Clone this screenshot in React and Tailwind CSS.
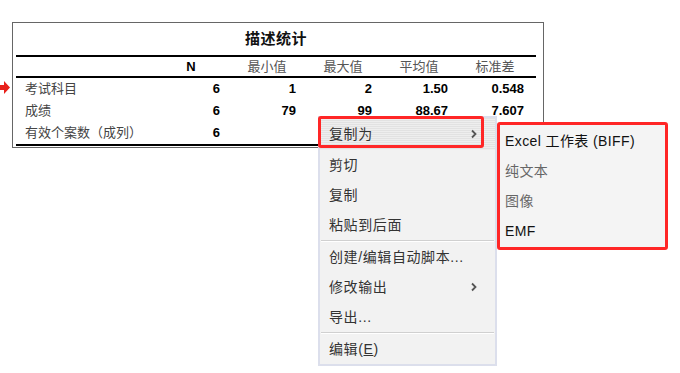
import React from "react";

const font = "font-['Liberation_Sans','Noto_Sans_CJK_SC',sans-serif]";

const rows = [
  { label: "考试科目", n: "6", min: "1", max: "2", mean: "1.50", sd: "0.548" },
  { label: "成绩", n: "6", min: "79", max: "99", mean: "88.67", sd: "7.607" },
  { label: "有效个案数（成列）", n: "6", min: "", max: "", mean: "", sd: "" },
];

const cols = "grid grid-cols-[144px_62px_76px_76px_76px_76px_1fr]";

function Chevron() {
  return (
    <svg width="8" height="10" viewBox="0 0 8 10" className="text-[#555]">
      <path d="M2 1.5 L5.5 5 L2 8.5" fill="none" stroke="currentColor" strokeWidth="1.8" />
    </svg>
  );
}

function MenuItem({ children, arrow, className = "" }) {
  return (
    <div className={`h-[30px] flex items-center justify-between pl-[9px] pr-[17px] text-[14px] tracking-[0.6px] text-[#333] ${className}`}>
      <span>{children}</span>
      {arrow && <Chevron />}
    </div>
  );
}

function Sep() {
  return <div className="h-[2px] mx-[1px] border-t border-[#d0d0d0] bg-white" />;
}

export default function App() {
  return (
    <div className={`relative w-[680px] h-[373px] bg-white overflow-hidden ${font}`}>
      {/* red pointer */}
      <svg width="10" height="13" viewBox="0 0 10 13" className="absolute left-0 top-[81px]">
        <polygon points="0,4 4,4 4,0 10,6.5 4,13 4,9 0,9" fill="#e8211b" />
      </svg>

      {/* 描述统计 table */}
      <div className="ml-[12px] mt-[22px] w-[532px] border border-[#666] pl-[3px] pr-[7px] pb-[1px]">
        <div className="h-[32px] flex items-center justify-center text-[15px] font-bold text-[#111] tracking-[0.5px]">
          描述统计
        </div>
        <div className="h-[2px] bg-black" />
        <div className={`${cols} h-[19px] items-center text-[13px] text-[#555]`}>
          <div />
          <div className="text-center font-bold text-black">N</div>
          <div className="text-center pl-[14px]">最小值</div>
          <div className="text-center pl-[14px]">最大值</div>
          <div className="text-center pl-[14px]">平均值</div>
          <div className="text-center pl-[14px]">标准差</div>
          <div />
        </div>
        <div className="h-[2px] bg-black" />
        {rows.map((r) => (
          <div key={r.label} className={`${cols} h-[22px] items-center text-[13px]`}>
            <div className="pl-[9px] text-[#444]">{r.label}</div>
            <div className="text-right pr-[2px] font-bold text-black">{r.n}</div>
            <div className="text-right pr-[2px] font-bold text-black">{r.min}</div>
            <div className="text-right pr-[2px] font-bold text-black">{r.max}</div>
            <div className="text-right pr-[2px] font-bold text-black">{r.mean}</div>
            <div className="text-right pr-[2px] font-bold text-black">{r.sd}</div>
            <div />
          </div>
        ))}
        <div className="h-[2px] bg-black" />
      </div>

      {/* context menu */}
      <div className="absolute left-[318px] top-[116px] w-[179px] border-2 border-[#dcdfec] bg-[#f2f2f2]">
        <div className="h-[32px] flex items-center justify-between pl-[9px] pr-[17px] text-[14px] tracking-[0.6px] text-[#333] bg-[repeating-linear-gradient(180deg,#e2e2e2_0px,#e2e2e2_1px,#eeeeee_1px,#eeeeee_2px)]">
          <span>复制为</span>
          <Chevron />
        </div>
        <MenuItem>剪切</MenuItem>
        <MenuItem>复制</MenuItem>
        <MenuItem>粘贴到后面</MenuItem>
        <Sep />
        <MenuItem>创建/编辑自动脚本...</MenuItem>
        <MenuItem arrow>修改输出</MenuItem>
        <MenuItem>导出...</MenuItem>
        <Sep />
        <MenuItem>
          编辑(<span className="underline">E</span>)
        </MenuItem>
      </div>

      {/* highlight around 复制为 */}
      <div className="absolute left-[318px] top-[116px] w-[166px] h-[32px] border-[3px] border-[#ff2626] rounded-[3px]" />

      {/* submenu */}
      <div className="absolute left-[497px] top-[122px] w-[171px] h-[128px] border-[3px] border-[#ff2626] rounded-[3px] bg-[#f4f4f4] pt-[1px] text-[14px] tracking-[0.4px]">
        <div className="h-[30px] flex items-center pl-[5px] text-[#111]">Excel 工作表 (BIFF)</div>
        <div className="h-[30px] flex items-center pl-[5px] text-[#666]">纯文本</div>
        <div className="h-[30px] flex items-center pl-[5px] text-[#666]">图像</div>
        <div className="h-[30px] flex items-center pl-[5px] text-[#111]">EMF</div>
      </div>
    </div>
  );
}
